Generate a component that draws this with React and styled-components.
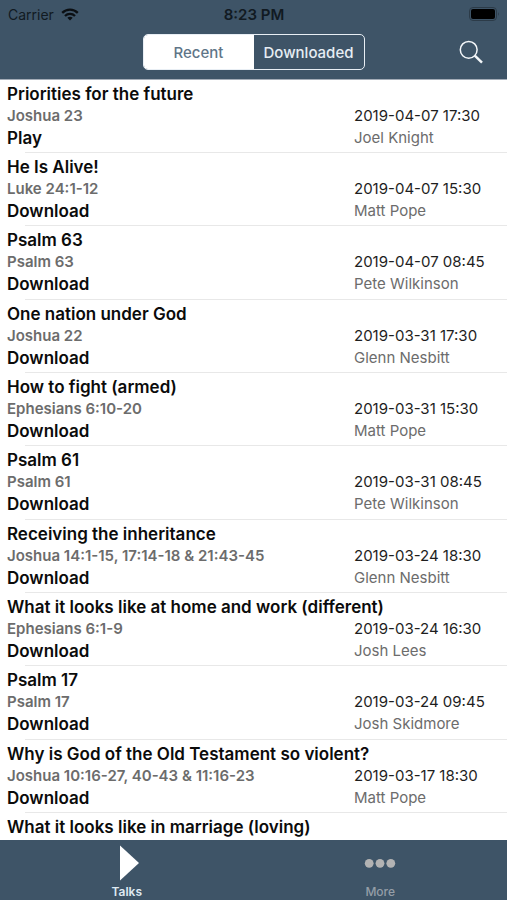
import React, { useState } from "react";
import styled, { createGlobalStyle } from "styled-components";

const GlobalStyle = createGlobalStyle`
  *, *::before, *::after { box-sizing: border-box; }
  body { margin: 0; background: #fff; }
  button { font: inherit; border: 0; padding: 0; margin: 0; background: none; cursor: pointer; }
`;

const Screen = styled.div`
  display: flex;
  flex-direction: column;
  height: 100vh;
  font-family: Inter, "Liberation Sans", sans-serif;
  color: #0b0b0b;
  background: #fff;
`;

const Header = styled.header`
  flex: none;
  background: #3e5467;
  padding-bottom: 9px;
  border-bottom: 1px solid #a3acb7;
`;

const StatusBar = styled.div`
  display: grid;
  grid-template-columns: 1fr auto 1fr;
  align-items: center;
  height: 28px;
  padding: 0 7px 0 8px;
  font-size: 14px;
  color: #111a22;
`;

const Carrier = styled.div`
  display: flex;
  align-items: center;
  gap: 7px;
`;

const Clock = styled.time`
  font-size: 15px;
  font-weight: 600;
`;

const Battery = styled.svg`
  justify-self: end;
`;

const NavBar = styled.nav`
  display: grid;
  grid-template-columns: 1fr auto 1fr;
  align-items: center;
  margin-top: 6px;
  padding: 0 23px;
`;

const Segments = styled.div`
  grid-column: 2;
  display: grid;
  grid-template-columns: 1fr 1fr;
  width: 222px;
  height: 36px;
  border: 1px solid #e8eef4;
  border-radius: 5px;
  overflow: hidden;
`;

const Segment = styled.button`
  && {
    font-size: 15px;
    font-weight: 500;
    color: ${(p) => (p.$active ? "#5f7588" : "#e6edf3")};
    background: ${(p) => (p.$active ? "#fff" : "transparent")};
  }
`;

const SearchButton = styled.button`
  justify-self: end;
  display: flex;
`;

const TalkList = styled.ul`
  flex: 1;
  min-height: 0;
  margin: 0;
  padding: 0;
  list-style: none;
  overflow-y: auto;
  scrollbar-width: none;
`;

const Talk = styled.li`
  display: grid;
  grid-template-columns: minmax(0, 1fr) 146px;
  grid-template-rows: 22px 22px 22px;
  height: 73px;
  padding: 3px 7px 4px;
  line-height: 22px;
  background: linear-gradient(#e8e8e8, #e8e8e8) 25px 100% / 100% 1px no-repeat;

  &:nth-child(3n) {
    height: 74px;
  }
`;

const Title = styled.h2`
  grid-column: 1 / -1;
  margin: 0;
  font-size: 17px;
  line-height: 22px;
  font-weight: 600;
  white-space: nowrap;
`;

const Passage = styled.span`
  font-size: 15px;
  line-height: 21px;
  font-weight: 600;
  color: #6c6c6c;
`;

const Recorded = styled.time`
  font-size: 15px;
  line-height: 21px;
  color: #1e1e1e;
`;

const Action = styled.button`
  && {
    justify-self: start;
    font-size: 17px;
    font-weight: 600;
    line-height: 22px;
    color: #0b0b0b;
  }
`;

const Speaker = styled.span`
  font-size: 15px;
  line-height: 21px;
  color: #6c6c6c;
`;

const TabBar = styled.nav`
  flex: none;
  display: grid;
  grid-template-columns: 1fr 1fr;
  height: 60px;
  background: #3e5467;
`;

const Tab = styled.button`
  && {
    display: flex;
    flex-direction: column;
    align-items: center;
    padding-top: 5px;
    gap: 3px;
    font-size: 12px;
    line-height: 16px;
    font-weight: ${(p) => (p.$active ? 600 : 500)};
    color: ${(p) => (p.$active ? "#dfe9f2" : "#959ea7")};
  }
`;

const talks = [
  ["Priorities for the future", "Joshua 23", "2019-04-07 17:30", "Joel Knight", "Play"],
  ["He Is Alive!", "Luke 24:1-12", "2019-04-07 15:30", "Matt Pope", "Download"],
  ["Psalm 63", "Psalm 63", "2019-04-07 08:45", "Pete Wilkinson", "Download"],
  ["One nation under God", "Joshua 22", "2019-03-31 17:30", "Glenn Nesbitt", "Download"],
  ["How to fight (armed)", "Ephesians 6:10-20", "2019-03-31 15:30", "Matt Pope", "Download"],
  ["Psalm 61", "Psalm 61", "2019-03-31 08:45", "Pete Wilkinson", "Download"],
  ["Receiving the inheritance", "Joshua 14:1-15, 17:14-18 & 21:43-45", "2019-03-24 18:30", "Glenn Nesbitt", "Download"],
  ["What it looks like at home and work (different)", "Ephesians 6:1-9", "2019-03-24 16:30", "Josh Lees", "Download"],
  ["Psalm 17", "Psalm 17", "2019-03-24 09:45", "Josh Skidmore", "Download"],
  ["Why is God of the Old Testament so violent?", "Joshua 10:16-27, 40-43 & 11:16-23", "2019-03-17 18:30", "Matt Pope", "Download"],
  ["What it looks like in marriage (loving)"],
];

function TalkRow({ talk }) {
  const [title, passage, recorded, speaker, action] = talk;
  return (
    <Talk>
      <Title>{title}</Title>
      {passage && (
        <>
          <Passage>{passage}</Passage>
          <Recorded>{recorded}</Recorded>
          <Action type="button">{action}</Action>
          <Speaker>{speaker}</Speaker>
        </>
      )}
    </Talk>
  );
}

export default function App() {
  const [filter, setFilter] = useState("Recent");
  return (
    <Screen>
      <GlobalStyle />
      <Header>
        <StatusBar>
          <Carrier>
            Carrier
            <svg width="18" height="13" viewBox="0 0 18 13" fill="none" stroke="#0b0f13" strokeWidth="2.3" aria-hidden="true">
              <path d="M1.2 4.9C5.5.6 12.5.6 16.8 4.9" />
              <path d="M4 8C6.8 5.2 11.2 5.2 14 8" />
              <path d="M9 12.4 6.3 9.8Q9 7.6 11.7 9.8Z" fill="#0b0f13" stroke="none" />
            </svg>
          </Carrier>
          <Clock>8:23 PM</Clock>
          <Battery width="31" height="14" viewBox="0 0 31 14" aria-hidden="true">
            <rect x="0.5" y="0.5" width="27" height="13" rx="3.5" fill="none" stroke="#2c3b48" />
            <rect x="2" y="2" width="24" height="10" rx="2" fill="#000" />
            <path d="M29 5q1.7 2 0 4z" fill="#2c3b48" />
          </Battery>
        </StatusBar>
        <NavBar>
          <Segments>
            {["Recent", "Downloaded"].map((name) => (
              <Segment key={name} type="button" $active={filter === name} aria-pressed={filter === name} onClick={() => setFilter(name)}>
                {name}
              </Segment>
            ))}
          </Segments>
          <SearchButton type="button" aria-label="Search">
            <svg width="26" height="24" viewBox="0 0 26 24" fill="none" stroke="#f4f7fa" aria-hidden="true">
              <circle cx="10.7" cy="9.8" r="8.4" strokeWidth="1.5" />
              <path d="M16.8 15.7 24 22.6" strokeWidth="2.5" />
            </svg>
          </SearchButton>
        </NavBar>
      </Header>
      <TalkList>
        {talks.map((talk) => (
          <TalkRow key={talk[0]} talk={talk} />
        ))}
      </TalkList>
      <TabBar>
        <Tab type="button" $active aria-current="page">
          <svg width="38" height="36" viewBox="0 0 38 36" aria-hidden="true">
            <path d="M12 .5 31 18 12 35.5z" fill="#fff" />
          </svg>
          Talks
        </Tab>
        <Tab type="button">
          <svg width="38" height="36" viewBox="0 0 38 36" fill="#b3b3b3" aria-hidden="true">
            <circle cx="8.2" cy="18.3" r="4.4" />
            <circle cx="19" cy="18.3" r="4.4" />
            <circle cx="29.8" cy="18.3" r="4.4" />
          </svg>
          More
        </Tab>
      </TabBar>
    </Screen>
  );
}
